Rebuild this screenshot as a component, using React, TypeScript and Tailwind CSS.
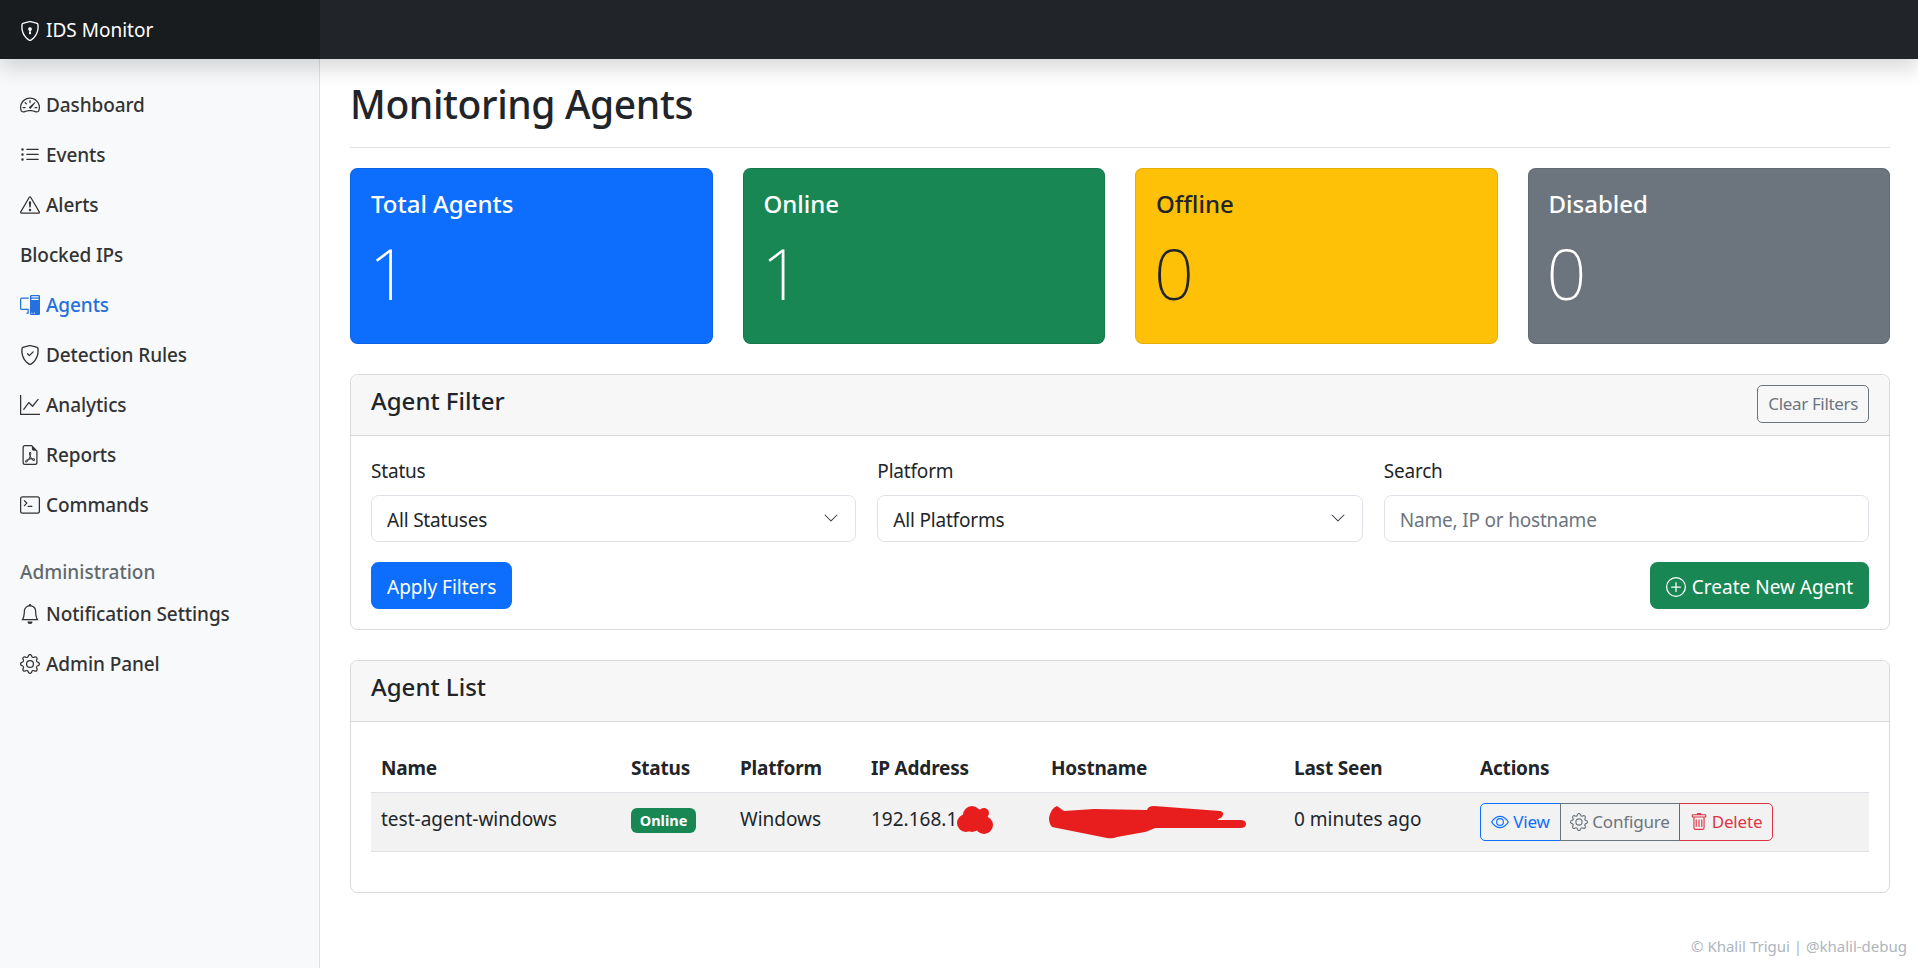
import React from 'react';
import {
  BsBell,
  BsChevronDown,
  BsExclamationTriangle,
  BsEye,
  BsFileEarmarkPdf,
  BsGear,
  BsGraphUp,
  BsListUl,
  BsPcDisplay,
  BsPlusCircle,
  BsShieldCheck,
  BsShieldLock,
  BsSpeedometer2,
  BsTerminal,
  BsTrash,
} from 'react-icons/bs';

const navItems = [
  { label: 'Dashboard', icon: <BsSpeedometer2 /> },
  { label: 'Events', icon: <BsListUl /> },
  { label: 'Alerts', icon: <BsExclamationTriangle /> },
  { label: 'Blocked IPs' },
  { label: 'Agents', icon: <BsPcDisplay />, active: true },
  { label: 'Detection Rules', icon: <BsShieldCheck /> },
  { label: 'Analytics', icon: <BsGraphUp /> },
  { label: 'Reports', icon: <BsFileEarmarkPdf /> },
  { label: 'Commands', icon: <BsTerminal /> },
];

const adminItems = [
  { label: 'Notification Settings', icon: <BsBell /> },
  { label: 'Admin Panel', icon: <BsGear /> },
];

const stats = [
  { label: 'Total Agents', value: 1, color: 'bg-[#0d6efd] text-white' },
  { label: 'Online', value: 1, color: 'bg-[#198754] text-white' },
  { label: 'Offline', value: 0, color: 'bg-[#ffc107] text-[#212529]' },
  { label: 'Disabled', value: 0, color: 'bg-[#6c757d] text-white' },
];

const columns = [
  { label: 'Name', width: 'w-[250px]' },
  { label: 'Status', width: 'w-[109px]' },
  { label: 'Platform', width: 'w-[131px]' },
  { label: 'IP Address', width: 'w-[180px]' },
  { label: 'Hostname', width: 'w-[243px]' },
  { label: 'Last Seen', width: 'w-[186px]' },
  { label: 'Actions', width: 'w-[399px]' },
];

const NavLink: React.FC<{ label: string; icon?: React.ReactNode; active?: boolean }> = ({
  label,
  icon,
  active,
}) => (
  <a
    href="#"
    className={`flex h-[50px] items-center gap-[6px] px-5 text-[19px] font-medium tracking-[-0.005em] ${
      active ? 'text-[#2470dc]' : 'text-[#333]'
    }`}
  >
    {icon && <span className="text-[20px]">{icon}</span>}
    {label}
  </a>
);

const Select: React.FC<{ label: string; option: string }> = ({ label, option }) => (
  <div>
    <label className="mb-[9px] block text-[19px] leading-[30px] tracking-[-0.01em]">{label}</label>
    <div className="relative">
      <select className="h-[47px] w-full appearance-none rounded-[7.5px] border border-[#dee2e6] bg-white pl-[15px] pt-1 text-[19px] tracking-[-0.01em] text-[#212529]">
        <option>{option}</option>
      </select>
      <BsChevronDown className="pointer-events-none absolute right-[17px] top-[15px] text-[16px] text-[#343a40]" />
    </div>
  </div>
);

const App: React.FC = () => {
  return (
    <div className="flex h-screen flex-col overflow-hidden bg-white font-['Noto_Sans',sans-serif] text-[#212529]">
      <header className="relative z-10 flex h-[59px] shrink-0 bg-[#212529] shadow-[0_10px_20px_rgba(0,0,0,0.15)]">
        <div className="flex w-[320px] items-center gap-[6px] bg-[#191c1f] px-5 pt-[2px] text-[19px] text-white">
          <BsShieldLock className="text-[20px]" />
          IDS Monitor
        </div>
      </header>

      <div className="flex min-h-0 flex-1">
        <aside className="w-[320px] shrink-0 border-r border-[#dfe0e1] bg-[#f8f9fa] pt-[21px]">
          {navItems.map((item) => (
            <NavLink key={item.label} {...item} />
          ))}
          <div className="mt-[27px] px-5 text-[19px] font-medium leading-[30px] text-[#62696f]">
            Administration
          </div>
          <div className="mt-[2px]">
            {adminItems.map((item) => (
              <NavLink key={item.label} {...item} />
            ))}
          </div>
        </aside>

        <main className="relative min-w-0 flex-1 pl-[30px] pr-[28px] pt-[21px]">
          <div className="mb-5 border-b border-[#dee2e6] pb-[19px]">
            <h1 className="text-[39px] font-medium leading-[48px] tracking-[-0.01em]">Monitoring Agents</h1>
          </div>

          <div className="mb-[30px] grid grid-cols-4 gap-[30px]">
            {stats.map((stat) => (
              <div
                key={stat.label}
                className={`h-[176px] rounded-[7.5px] border border-black/10 p-5 ${stat.color}`}
              >
                <div className="text-[24px] font-medium leading-[30px]">{stat.label}</div>
                <div className="-ml-[2px] mt-3 text-[70px] font-extralight leading-[84px]">{stat.value}</div>
              </div>
            ))}
          </div>

          <section className="mb-[30px] rounded-[7.5px] border border-[#d9d9da]">
            <div className="flex h-[61px] items-center justify-between rounded-t-[7.5px] border-b border-[#d9d9da] bg-[#f7f7f7] px-5">
              <h5 className="mb-[8px] text-[24px] font-medium">Agent Filter</h5>
              <button className="mb-[2px] h-[38px] rounded-[5px] border border-[#6c757d] px-[10px] text-[17px] tracking-[-0.02em] text-[#6c757d]">
                Clear Filters
              </button>
            </div>
            <div className="p-5">
              <div className="grid grid-cols-3 gap-[21px]">
                <Select label="Status" option="All Statuses" />
                <Select label="Platform" option="All Platforms" />
                <div>
                  <label className="mb-[9px] block text-[19px] leading-[30px] tracking-[-0.01em]">Search</label>
                  <input
                    placeholder="Name, IP or hostname"
                    className="h-[47px] w-full rounded-[7.5px] border border-[#dee2e6] bg-white px-[15px] pt-[3px] text-[19px] tracking-[-0.01em] placeholder:text-[#6c757d]"
                  />
                </div>
              </div>
              <div className="mt-5 flex items-center justify-between">
                <button className="h-[47px] rounded-[7.5px] bg-[#0d6efd] px-4 pt-1 text-[19px] text-white">
                  Apply Filters
                </button>
                <button className="flex h-[47px] items-center gap-[6px] rounded-[7.5px] bg-[#198754] px-4 pt-[3px] text-[19px] text-white">
                  <BsPlusCircle className="text-[20px]" />
                  Create New Agent
                </button>
              </div>
            </div>
          </section>

          <section className="rounded-[7.5px] border border-[#d9d9da]">
            <div className="flex h-[61px] items-center rounded-t-[7.5px] border-b border-[#d9d9da] bg-[#f7f7f7] px-5">
              <h5 className="mb-[8px] text-[24px] font-medium">Agent List</h5>
            </div>
            <div className="px-5 pb-10 pt-5">
              <table className="w-full table-fixed border-collapse text-left text-[19px]">
                <thead>
                  <tr className="h-[50px] border-b border-[#dee2e6]">
                    {columns.map((col) => (
                      <th key={col.label} className={`${col.width} px-[10px] pt-[2px] font-bold tracking-[-0.01em]`}>
                        {col.label}
                      </th>
                    ))}
                  </tr>
                </thead>
                <tbody>
                  <tr className="h-[59px] border-b border-[#dee2e6] bg-[#f2f2f2]">
                    <td className="px-[10px] pb-1">test-agent-windows</td>
                    <td className="px-[10px] pb-1">
                      <span className="inline-flex h-[25px] w-[65px] items-center justify-center rounded-[6px] bg-[#198754] text-[14.5px] font-bold leading-none text-white">
                        Online
                      </span>
                    </td>
                    <td className="px-[10px] pb-1">Windows</td>
                    <td className="relative px-[10px] pb-1">
                      192.168.1.
                      <svg className="absolute left-[90px] top-[8px]" width="44" height="40" viewBox="0 0 44 40">
                        <g fill="#e81e1e">
                          <circle cx="21" cy="14" r="9" />
                          <circle cx="33" cy="12" r="5" />
                          <circle cx="15" cy="22" r="9" />
                          <circle cx="33" cy="24" r="9" />
                          <circle cx="21" cy="21" r="10" />
                          <circle cx="27" cy="18" r="10" />
                        </g>
                      </svg>
                    </td>
                    <td className="relative px-[10px]">
                      <svg className="absolute left-0 top-[8px]" width="220" height="44" viewBox="0 0 220 44">
                        <path
                          d="M16 5 Q10 7 8 17 Q8 23 11 26 L66 37 Q72 38 76 36 L104 31 Q110 29 114 27 L199 27 Q205 27 205 23 Q205 19 199 19 L176 19 L181 16 Q184 11 179 10 L113 5 Q107 5 106 9 L53 8 L23 10 Z"
                          fill="#e81e1e"
                        />
                      </svg>
                    </td>
                    <td className="px-[10px] pb-1">0 minutes ago</td>
                    <td className="px-[10px]">
                      <div className="flex h-[38px] w-[293px] text-[17px] tracking-[-0.01em]">
                        <button className="flex w-[81px] items-center justify-center gap-[4px] rounded-l-[5px] border border-[#0d6efd] text-[#0d6efd]">
                          <BsEye className="text-[18px]" />
                          View
                        </button>
                        <button className="-ml-px flex w-[120px] items-center justify-center gap-[4px] border border-[#6c757d] text-[#6c757d]">
                          <BsGear className="text-[18px]" />
                          Configure
                        </button>
                        <button className="-ml-px flex w-[94px] items-center justify-center gap-[4px] rounded-r-[5px] border border-[#dc3545] text-[#dc3545]">
                          <BsTrash className="text-[18px]" />
                          Delete
                        </button>
                      </div>
                    </td>
                  </tr>
                </tbody>
              </table>
            </div>
          </section>

          <div className="absolute bottom-[11px] right-[11px] text-[15px] text-[#adb5bd]">
            © Khalil Trigui | @khalil-debug
          </div>
        </main>
      </div>
    </div>
  );
};

export default App;
